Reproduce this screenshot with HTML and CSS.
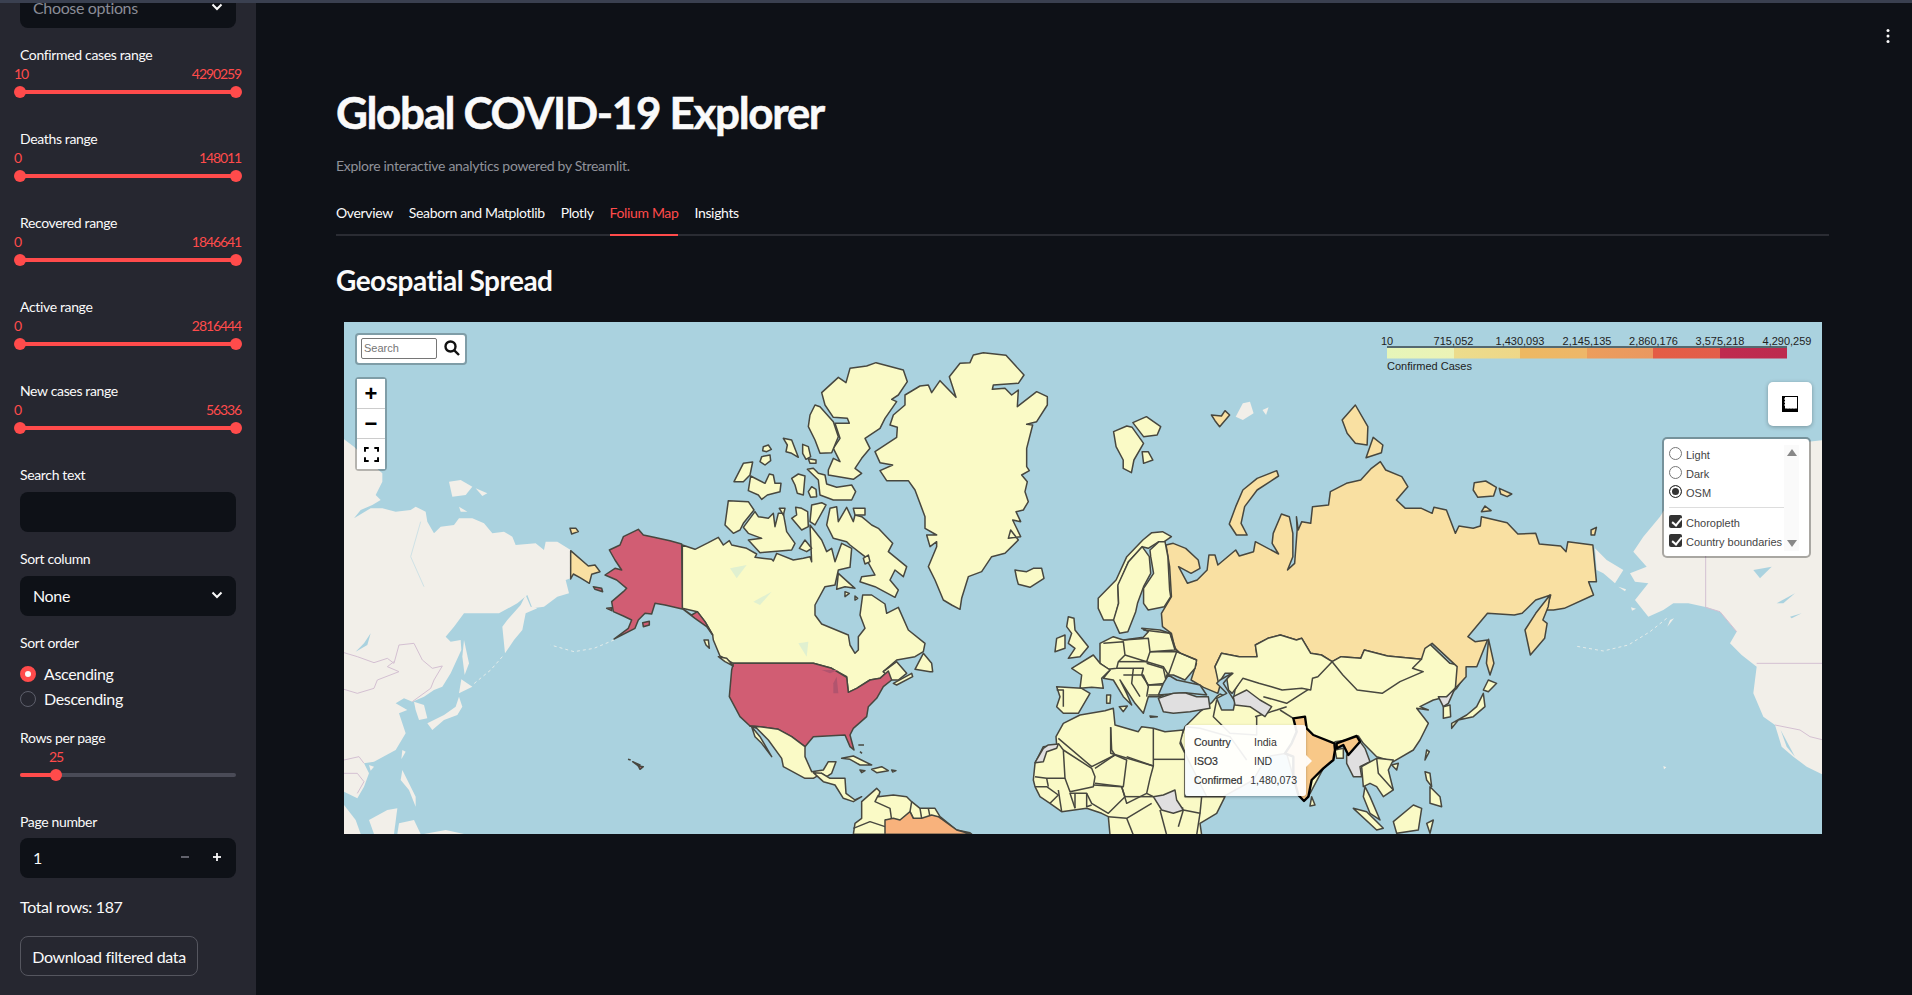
FILE: index.html
```html
<!DOCTYPE html>
<html lang="en">

<head>
    <meta charset="UTF-8">
    <title>Global COVID-19 Explorer</title>
    <link rel="stylesheet" href="styles.css">
</head>

<body>
    <aside class="sidebar">
        <div class="select cut">
            <span class="placeholder">Choose options</span>
            <svg class="chev" viewBox="0 0 12 8"><polyline points="1.5,1.5 6,6 10.5,1.5" /></svg>
        </div>

        <div class="field">
            <div class="lbl">Confirmed cases range</div>
            <div class="vals"><span>10</span><span>4290259</span></div>
            <div class="track"><i class="fill full"></i><b class="thumb start"></b><b class="thumb end"></b></div>
        </div>
        <div class="field">
            <div class="lbl">Deaths range</div>
            <div class="vals"><span>0</span><span>148011</span></div>
            <div class="track"><i class="fill full"></i><b class="thumb start"></b><b class="thumb end"></b></div>
        </div>
        <div class="field">
            <div class="lbl">Recovered range</div>
            <div class="vals"><span>0</span><span>1846641</span></div>
            <div class="track"><i class="fill full"></i><b class="thumb start"></b><b class="thumb end"></b></div>
        </div>
        <div class="field">
            <div class="lbl">Active range</div>
            <div class="vals"><span>0</span><span>2816444</span></div>
            <div class="track"><i class="fill full"></i><b class="thumb start"></b><b class="thumb end"></b></div>
        </div>
        <div class="field">
            <div class="lbl">New cases range</div>
            <div class="vals"><span>0</span><span>56336</span></div>
            <div class="track"><i class="fill full"></i><b class="thumb start"></b><b class="thumb end"></b></div>
        </div>

        <div class="lbl">Search text</div>
        <div class="input"></div>

        <div class="lbl next">Sort column</div>
        <div class="select">
            <span>None</span>
            <svg class="chev" viewBox="0 0 12 8"><polyline points="1.5,1.5 6,6 10.5,1.5" /></svg>
        </div>

        <div class="lbl next">Sort order</div>
        <div class="radios">
            <div class="radio on"><i></i>Ascending</div>
            <div class="radio"><i></i>Descending</div>
        </div>

        <div class="field">
            <div class="lbl">Rows per page</div>
            <div class="vals single"><span>25</span></div>
            <div class="track off"><i class="fill part"></i><b class="thumb mid"></b></div>
        </div>

        <div class="lbl">Page number</div>
        <div class="input number">
            <span class="num">1</span>
            <svg class="step dim" viewBox="0 0 10 10"><line x1="1" y1="5" x2="9" y2="5" /></svg>
            <svg class="step" viewBox="0 0 10 10"><line x1="1" y1="5" x2="9" y2="5" /><line x1="5" y1="1" x2="5" y2="9" /></svg>
        </div>

        <div class="total">Total rows: 187</div>
        <div class="download">Download filtered data</div>
    </aside>

    <main class="main">
        <svg class="dots" viewBox="0 0 4 16"><circle cx="2" cy="2.5" r="1.5" /><circle cx="2" cy="8" r="1.5" /><circle cx="2" cy="13.5" r="1.5" /></svg>

        <h1>Global COVID-19 Explorer</h1>
        <p class="sub">Explore interactive analytics powered by Streamlit.</p>

        <nav class="tabs">
            <span>Overview</span>
            <span>Seaborn and Matplotlib</span>
            <span>Plotly</span>
            <span class="active">Folium Map</span>
            <span>Insights</span>
        </nav>

        <h2>Geospatial Spread</h2>

        <div class="map">
            <svg class="world" viewBox="344 322 1478 512">
                <!-- fondo de tiles -->
                <g class="tile" transform="translate(344 480) scale(.33333)">
                    <polygon points="-10,-130 30,-100 70,-60 115,-20 115,5 95,45 110,60 85,75 50,90 30,115 80,85 115,85 155,95 200,90 215,80 245,95 250,125 270,160 290,140 330,135 345,115 385,115 420,130 445,160 480,155 505,170 515,195 575,190 600,210 605,185 640,185 680,210 680,295 665,300 675,340 640,350 600,380 565,385 550,345 520,370 465,400 360,400 330,440 305,470 320,485 350,480 352,510 320,580 295,620 270,630 240,650 205,665 180,655 155,670 190,690 165,700 185,760 155,810 90,845 60,850 75,880 60,920 40,955 0,935 -10,930" />
                    <polygon points="0,975 35,1020 50,1062 -10,1062 -10,975" />
                    <polygon points="75,1020 130,990 160,985 150,1062 90,1062" />
                    <polygon points="165,1030 210,1020 230,1062 160,1062" />
                    <polygon points="240,1062 305,1050 360,1062" />
                    <polygon points="210,665 240,675 250,715 225,720 215,690" />
                    <polygon points="360,480 375,550 362,585 355,530" />
                    <polygon points="352,598 385,620 345,640" />
                    <polygon points="345,650 355,680 340,705 300,720 265,750 250,730 300,705 335,680" />
                    <polygon points="545,345 530,375 490,420 475,440 483,520 510,480 535,450 545,400 580,385 560,380" />
                    <polygon points="315,5 350,0 385,20 365,45 325,50" />
                    <polygon points="395,25 430,40 415,48" />
                    <polygon points="345,80 370,95 350,95" />
                    <polygon points="175,810 185,815 172,838" />
                    <polygon points="75,855 90,860 80,872" />
                    <polygon points="175,870 190,900 215,950 215,980 195,930 170,900" />
                    <polyline class="chain" points="475,530 440,570 385,615" />
                    <polyline class="chain" points="810,480 750,505 690,515 620,495" />
                    <polyline class="bd" points="0,518 40,530 90,548 130,535 150,550 165,495 210,490 235,540 265,565 295,558 270,600 260,625 205,665" />
                    <polyline class="bd" points="0,628 40,640 90,625 100,600 165,575 130,560 150,545" />
                    <polyline class="bd" points="0,840 45,830 60,850" />
                    <polyline class="bd" points="0,880 40,880 60,905 40,940" />
                    <polyline class="river" points="230,125 200,230 240,320" />
                    <polygon class="lake" points="80,460 70,495 35,515 60,490" />
                </g>
                <g class="tile" transform="translate(1560 520) scale(.33333)">
                    <polygon points="105,85 140,120 190,150 165,190 130,160 110,150" />
                    <polygon points="250,50 220,95 260,140 210,160 225,185 265,190 225,240 265,290 310,270 340,250 385,250 440,262 480,275 530,335 510,370 545,405 590,440 580,520 610,590 645,615 665,680 700,710 740,740 790,765 790,-240 420,-200 300,-10" />
                    <polygon points="175,200 198,208 195,214" />
                    <polygon points="330,300 342,295 322,320" />
                    <polygon points="213,262 228,266 216,272" />
                    <polyline class="chain" points="320,295 270,335 205,375 130,393 45,378" />
                    <polygon points="310,738 319,742 312,748" />
                    <polyline class="bd" points="437,0 437,262 480,275 530,335" />
                    <polyline class="bd" points="590,430 790,430" />
                    <polyline class="bd" points="645,615 720,630 750,650 790,660" />
                    <polygon class="lake" points="580,150 635,140 600,175" />
                    <polygon class="lake" points="650,250 705,220 670,250" />
                    <polygon class="lake" points="690,290 725,280 695,295" />
                    <polygon class="lake" points="662,630 705,710 680,680" />
                    <polygon class="lake" points="480,280 525,345 495,310" />
                </g>

                <!-- pais por pais -->
                <g class="c" transform="translate(1000 600) scale(.33333)">
                    <polygon class="y" points="555,380 600,335 635,308 650,290 660,282 700,300 705,270 730,225 850,210 993,185 1100,190 1285,128 1350,190 1395,200 1390,235 1370,265 1340,290 1300,300 1260,320 1285,330 1250,325 1285,370 1260,420 1240,450 1180,485 1130,470 1090,430 1075,408 1040,420 1005,425 1005,450 1000,480 970,505 925,590 895,585 880,530 860,460 800,470 760,540 670,590 620,590 560,470 540,420" />
                    <polyline points="650,300 640,350 690,400 770,405 770,350" />
                    <polyline points="555,380 600,385 690,410 740,480" />
                    <polyline points="765,350 830,330 860,320" />
                    <polyline points="840,330 880,355" />
                    <polyline points="790,290 860,310 930,265" />
                </g>
                <g class="c" transform="translate(1050 400) scale(.35714 .33333)">
                    <polygon class="r" points="325,435 345,430 380,445 415,480 420,505 395,520 360,500 385,550 412,540 440,510 445,465 462,465 470,495 520,450 530,468 570,455 575,425 640,462 622,430 625,400 648,342 670,350 680,400 680,470 665,510 685,490 692,390 690,350 695,390 705,365 730,370 735,320 780,315 785,275 830,250 870,240 900,205 925,185 940,210 985,230 1002,260 970,300 995,325 1040,325 1070,340 1075,322 1110,330 1135,400 1145,378 1185,385 1205,378 1208,350 1280,368 1310,402 1360,400 1370,432 1430,438 1445,455 1450,425 1520,435 1530,545 1508,545 1522,585 1440,625 1410,630 1390,630 1402,585 1360,600 1322,640 1300,645 1225,640 1170,710 1190,725 1225,720 1195,800 1165,800 1165,830 1135,865 1140,800 1070,730 1050,745 1040,778 945,768 880,750 870,775 815,770 790,785 760,765 730,760 705,715 690,720 645,705 610,715 575,735 580,770 530,770 480,760 462,800 478,850 470,880 430,862 395,840 410,790 365,760 350,745 340,700 315,680 312,640 340,590 335,500" />
                    <polygon class="r" points="635,212 640,228 580,270 545,320 535,370 552,405 522,405 502,372 520,320 540,270 580,235" />
                    <polygon class="r" points="855,15 890,80 888,135 855,130 832,100 818,60" />
                    <polygon class="r" points="905,112 932,135 928,158 885,173" />
                    <polygon class="r" points="1188,248 1220,243 1250,262 1242,288 1198,292 1185,270" />
                    <polygon class="r" points="1258,265 1293,282 1280,290 1262,282" />
                    <polygon class="r" points="1218,318 1235,332 1208,335" />
                    <polygon class="r" points="452,45 480,48 490,32 503,45 475,80 462,62" />
                    <polygon class="r" points="1400,585 1395,620 1380,660 1392,670 1385,715 1345,765 1330,690 1360,640" />
                    <polygon class="r" points="1515,390 1530,382 1525,405 1515,405" />
                    <polygon class="r" points="1228,718 1243,790 1232,825 1222,790" />
                    <polygon class="land" points="540,10 560,5 570,40 540,60 520,50" />
                    <polygon class="land" points="595,30 612,22 605,45" />
                    <polygon class="y" points="178,95 215,78 230,82 262,130 235,180 228,218 205,205 205,180 185,140" />
                    <polygon class="y" points="232,68 270,50 310,80 300,105 262,110" />
                    <polygon class="y" points="258,155 275,155 288,180 262,190" />
                    <polygon class="y" points="135,595 185,540 215,470 260,420 285,398 315,395 340,410 320,425 305,425 275,445 258,440 220,485 190,560 192,610 180,660 150,660 135,625" />
                    <polygon class="y" points="258,440 278,470 282,520 262,560 245,610 240,635 218,695 195,700 178,660 192,610 190,555 220,485" />
                    <polygon class="y" points="280,450 305,425 322,425 330,470 335,570 338,590 320,620 275,630 262,610 262,565 290,520 282,470" />
                    <polygon class="y" points="462,800 480,760 530,770 580,770 575,735 610,715 645,705 690,720 705,715 730,760 760,765 790,785 750,830 735,835 730,870 705,865 650,870 620,860 585,850 540,835 510,880 500,870 495,835 512,820 490,820 472,850" />
                    <polygon class="y" points="790,785 815,770 870,775 880,750 945,768 1040,778 1015,805 1045,815 980,845 930,880 860,870 820,825" />
                </g>
                <g class="c" transform="translate(1000 600) scale(.33333)">
                    <!-- europa -->
                    <polygon class="y" points="300,130 340,110 370,120 430,112 445,95 425,85 480,90 510,100 530,155 590,180 585,205 555,240 520,225 500,225 495,280 480,290 445,290 430,340 405,310 360,240 380,280 395,315 370,290 340,240 310,235 330,210 300,190" />
                    <polyline points="310,130 370,125 375,165 355,185 350,205 305,210" />
                    <polyline points="370,120 445,115 450,155 440,185 375,165" />
                    <polyline points="430,90 510,100 525,150 450,155" />
                    <polyline points="450,155 530,155 590,180" />
                    <polyline points="530,155 505,225 490,200 440,185" />
                    <polyline points="440,190 490,205 500,250 445,255 425,225" />
                    <polyline points="445,255 495,255 490,285 445,285" />
                    <polyline points="355,185 440,185" />
                    <polyline points="350,205 430,205 425,225" />
                    <polyline points="370,225 430,225 445,260 440,290" />
                    <polyline points="400,205 395,250 420,290" />
                    <polygon class="y" points="205,50 222,55 225,90 265,140 240,170 205,175 225,145 205,130 215,100 200,80" />
                    <polygon class="y" points="170,115 195,105 195,145 165,155" />
                    <polygon class="y" points="215,205 280,165 300,190 330,210 305,235 310,265 275,262 240,265 245,225" />
                    <polygon class="y" points="170,260 245,265 270,280 235,340 190,340 170,320 180,290" />
                    <polyline points="170,270 190,270 190,320" />
                    <polygon class="y" points="320,285 332,285 330,310 320,310" />
                    <polygon class="y" points="358,320 382,318 370,335" />
                    <polygon class="y" points="450,348 472,350 452,352" />
                    <polygon class="w" points="505,225 530,240 600,255 620,285 555,278 475,285 490,250" />
                    <polygon class="w" points="660,240 695,220 670,250 705,305 700,330 665,330 650,295 680,280 650,250" />

                    <!-- asia -->
                    <polygon class="g" points="475,295 520,280 555,278 590,290 625,290 630,325 570,335 520,340 490,335" />
                    <polygon class="g" points="700,290 740,270 780,300 815,320 795,350 750,320 705,315" />
                    <polygon class="g" points="1365,265 1340,290 1315,290 1330,320 1345,310" />
                    <polygon class="y" points="1330,320 1350,315 1352,350 1330,355" />
                    <polygon class="y" points="1005,450 1030,445 1030,475 1010,475" />
                    <polygon class="g" points="1040,465 1080,425 1095,445 1110,485 1080,500 1085,530 1060,530 1040,490" />
                    <polygon class="y" points="1085,500 1130,475 1180,480 1165,510 1180,570 1150,590 1130,560 1110,550 1090,560" />
                    <polyline points="1130,475 1135,520 1180,570" />
                    <polygon class="y" points="1095,560 1110,590 1140,660 1110,640 1090,590" />
                    <polygon class="y" points="1060,625 1100,635 1150,685 1130,690" />
                    <polygon class="y" points="1180,665 1240,615 1265,625 1255,690 1190,700" />
                    <polygon class="y" points="1280,670 1300,660 1290,700" />
                    <polygon class="y" points="1275,515 1290,520 1295,560 1280,540" />
                    <polygon class="y" points="1290,560 1320,590 1325,620 1290,610" />
                    <polygon class="y" points="1280,450 1288,455 1275,480" />
                    <polygon class="y" points="1175,495 1195,490 1190,510" />
                    <polygon class="y" points="935,590 945,615 930,618" />
                    <polygon class="y" points="1465,240 1490,250 1465,275 1450,270" />
                    <polygon class="y" points="1450,280 1455,320 1420,350 1375,360 1355,385 1355,370 1400,345 1430,320" />
                    <polygon class="o2 hover" points="880,355 915,350 920,385 940,405 1003,430 1005,450 1000,480 970,505 935,540 925,590 912,603 895,585 880,530 880,470 855,460 875,430 890,395" />
                    <polygon class="o2 hover" points="1010,430 1070,408 1080,425 1045,465 1030,435 1010,445" />
                </g>
                <g class="c" transform="translate(1020 640) scale(.33333)">
                    <!-- africa -->
                    <polygon class="y" points="110,315 108,290 130,250 180,225 255,212 280,205 285,255 355,275 365,260 400,265 435,275 490,270 480,310 495,340 495,470 615,470 590,520 540,550 545,585 270,585 265,530 245,520 200,505 125,515 90,490 60,470 45,440 40,420 45,370 70,320" />
                    <polyline points="115,295 215,380 285,345 275,330 272,262" />
                    <polyline points="115,310 130,330 135,415 80,415 45,410" />
                    <polyline points="130,330 215,385 225,410 220,440 150,455 135,415" />
                    <polyline points="225,385 285,345 320,360 310,440 225,430" />
                    <polyline points="272,262 272,340 400,378 400,265" />
                    <polyline points="320,350 400,378 390,415 380,460 320,490 305,440" />
                    <polyline points="400,358 495,358" />
                    <polyline points="380,460 400,470 490,505" />
                    <polyline points="220,435 305,440 315,470 265,520 215,490 200,460 150,460 165,505" />
                    <polyline points="165,460 165,505" />
                    <polyline points="200,460 200,500 215,495" />
                    <polyline points="45,440 80,440 115,465 90,490" />
                    <polyline points="80,415 85,440" />
                    <polyline points="115,450 125,515" />
                    <polyline points="265,530 320,535 395,490" />
                    <polyline points="315,470 400,470" />
                    <polyline points="320,535 340,585" />
                    <polyline points="420,510 440,585" />
                    <polyline points="490,510 540,520 530,585" />
                    <polyline points="475,560 490,510" />
                    <polyline points="540,520 545,470" />
                    <polygon class="g" points="400,470 430,465 465,450 470,480 490,510 460,520 425,510" />
                    <polygon class="g" points="45,368 70,325 85,315 115,312 110,325 80,335 70,365" />
                </g>
                <g class="c" transform="translate(760 340) scale(.33333)">
                    <!-- groenlandia y arriba de canada -->
                    <polygon class="y" points="435,165 480,138 505,135 515,158 540,122 588,172 568,110 600,70 630,68 640,45 670,38 738,46 792,105 775,130 700,135 697,148 735,145 755,165 775,150 772,200 830,155 862,170 862,195 830,245 800,253 818,255 800,325 800,380 808,392 785,405 802,425 795,455 805,485 790,510 768,515 782,545 758,540 782,590 745,595 752,570 775,600 735,640 695,650 665,695 625,710 605,775 600,808 575,795 550,780 525,720 505,680 530,620 530,605 510,620 500,585 530,585 495,565 495,530 465,450 445,422 380,422 360,392 398,375 360,368 345,335 410,292 412,262 390,255 400,225 435,195" />
                    <polygon class="y" points="185,158 235,112 258,128 270,85 320,78 348,68 430,90 442,125 415,165 395,178 410,185 375,235 360,265 315,295 330,325 305,355 285,385 305,400 280,418 205,405 205,390 220,355 240,365 220,325 240,295 225,250 268,250 262,235 220,232 195,195" />
                    <polygon class="y" points="165,195 180,200 220,245 235,290 215,338 180,340 165,300 145,260 150,225" />
                    <polygon class="y" points="765,690 800,695 820,685 845,685 852,715 810,742 775,733 770,715" />
                </g>
                <g class="c" transform="translate(560 480) scale(.33333)">
                    <polygon class="y" points="367,195 405,208 445,188 475,172 490,195 508,182 515,195 560,205 590,222 585,232 635,238 640,243 650,220 700,240 730,235 750,230 755,245 750,135 785,180 800,215 815,205 825,245 845,190 875,205 870,262 835,270 825,315 795,320 765,375 765,405 785,432 865,465 870,495 885,520 895,510 895,470 915,445 900,405 908,345 935,345 975,372 980,400 1015,382 1045,450 1095,490 1090,515 1065,530 1010,540 970,575 985,573 960,595 930,600 890,625 865,637 860,590 815,565 760,550 520,550 480,528 460,480 458,465 435,425 412,395 367,385" />
                    <polygon class="pale" points="510,265 560,255 530,295" />
                    <polygon class="pale" points="580,365 635,335 600,375" />
                    <polygon class="pale" points="715,490 745,485 740,530" />
                    <polygon class="y" points="970,575 1010,545 1040,580 1015,600 995,600" />
                    <polygon class="y" points="1000,610 1055,580 1058,590 1010,615" />
                    <polygon class="y" points="1090,520 1065,568 1110,575 1118,575 1115,550" />
                    <polygon class="u" points="235,148 250,165 275,170 330,182 365,192 367,385 395,405 412,395 435,425 458,465 440,440 405,415 370,388 315,375 285,370 275,402 255,400 235,420 225,445 162,477 205,445 215,420 190,408 160,395 155,365 190,335 200,325 170,300 135,285 165,265 185,270 165,240 148,210 180,195 190,170" />
                    <polygon class="u" points="520,550 760,550 815,565 860,592 865,637 890,625 930,600 960,595 985,573 995,600 970,620 950,655 925,680 920,710 880,745 870,765 882,810 870,800 855,765 800,768 760,770 735,800 695,770 655,748 600,740 570,738 540,710 508,650 515,570" />
                    <polygon class="lk" points="785,570 835,570 810,580" />
                    <polygon class="lk" points="830,590 835,640 820,640 820,610" />
                    <polygon class="y" points="570,738 600,740 655,748 695,770 735,800 735,830 755,875 790,870 805,845 828,845 815,880 800,890 785,880 760,895 735,895 670,860 665,835 625,780 590,745" />
                    <polygon class="y" points="575,740 600,770 635,830 605,790 585,770" />
                    <polygon class="y" points="760,878 785,880 810,895 855,895 858,940 885,960 905,950 880,965 850,955 825,915 790,905" />
                    <polygon class="y" points="845,835 880,828 935,855 900,855 870,838" />
                    <polygon class="y" points="935,868 965,860 985,872 950,878" />
                    <polygon class="y" points="900,870 915,872 905,878" />
                    <polygon class="y" points="995,870 1008,872 998,876" />
                    <polyline points="895,795 912,795" />
                    <polyline points="900,815 906,820" />
                    <polygon class="y" points="475,530 500,535 520,558 495,545" />
                    <polygon class="y" points="432,480 445,480 448,505 438,495" />
                    <polygon class="y" points="905,965 950,925 960,935 955,950 1000,945 1040,950 1055,965 1080,985 1125,985 1140,1010 1190,1050 1230,1058 1235,1063 880,1063 885,1030 905,1015" />
                    <polyline points="955,945 945,965 990,985 995,1020 975,1020" />
                    <polyline points="1055,965 1050,995 1060,1015" />
                    <polyline points="1080,985 1085,1015" />
                    <polyline points="1105,985 1110,1010" />
                    <polyline points="880,1045 930,1025 975,1040" />
                    <polygon class="o" points="975,1063 975,1020 1000,1015 1020,1020 1050,995 1060,1015 1085,1015 1115,1005 1135,1010 1190,1050 1235,1063" />
                    <polygon class="r" points="32,212 85,258 105,255 120,275 95,283 88,310 60,293 40,282 32,297" />
                    <polygon class="r" points="30,145 48,145 55,155 35,162" />
                    <polygon class="u" points="100,320 125,325 128,335 105,328" />
                    <polygon class="u" points="140,385 155,383 155,392" />
                    <polygon class="u" points="248,428 268,424 268,435 250,440" />
                    <polyline points="204,838 212,840" />
                    <polygon class="u" points="218,845 240,855 235,858" />
                    <polygon class="u" points="235,858 250,860 240,868" />
                    <!-- baffin -->
                    <polygon class="y" points="810,85 830,80 835,125 860,82 880,125 885,105 905,110 935,135 955,145 998,190 985,215 1040,260 1030,290 1005,270 990,300 1015,330 1005,352 945,320 900,305 905,290 945,285 915,230 870,195 860,185 820,175 800,135" />
                    <polygon class="y" points="880,85 915,85 915,105 885,105" />
                    <polygon class="y" points="835,280 885,325 855,320 830,328" />
                    <polygon class="y" points="910,235 925,225 930,245 915,252" />
                    <polygon class="y" points="855,335 868,340 855,350" />
                    <polygon class="y" points="885,348 893,355 885,360" />
                </g>
                <g class="c" transform="translate(680 400) scale(.33333)">
                    <polygon class="y" points="190,190 218,186 210,225 190,245 162,245" />
                    <polygon class="y" points="250,140 265,135 274,148 260,155 248,152" />
                    <polygon class="y" points="245,170 270,165 272,182 255,195 240,185" />
                    <polygon class="y" points="310,115 335,120 355,172 335,160 318,155 322,135" />
                    <polygon class="y" points="368,133 385,140 392,170 378,178 368,160" />
                    <polygon class="y" points="385,176 408,180 408,190 390,190" />
                    <polygon class="y" points="212,228 255,250 268,222 280,225 285,250 303,250 300,275 262,285 245,298 235,285 205,272" />
                    <polygon class="y" points="335,235 355,222 375,228 370,285 352,280 345,255" />
                    <polygon class="y" points="395,260 408,268 410,290 392,292 385,275" />
                    <polygon class="y" points="382,208 400,205 415,220 435,225 440,252 470,262 515,255 527,275 515,300 460,300 420,285 415,240" />
                    <polygon class="y" points="145,302 205,305 222,330 190,370 180,390 160,400 135,375" />
                    <polygon class="y" points="225,335 235,350 265,355 280,340 285,380 295,340 310,340 320,395 345,430 335,450 240,458 205,420 245,415 205,400 190,382" />
                    <polygon class="y" points="298,325 315,325 310,345" />
                    <polygon class="y" points="347,322 365,325 383,335 385,380 365,390 335,355 350,345" />
                    <polygon class="y" points="395,315 425,308 438,315 405,375 390,365" />
                    <polygon class="y" points="375,420 395,445 380,455 358,445" />
                </g>

                <!-- leyenda -->
                <defs>
                    <linearGradient id="l1"><stop offset="0" stop-color="#e6f5b9" /><stop offset="1" stop-color="#ecf3b6" /></linearGradient>
                    <linearGradient id="l2"><stop offset="0" stop-color="#ecdc8c" /><stop offset="1" stop-color="#eed788" /></linearGradient>
                    <linearGradient id="l3"><stop offset="0" stop-color="#eeb861" /><stop offset="1" stop-color="#eeb769" /></linearGradient>
                    <linearGradient id="l4"><stop offset="0" stop-color="#ec9d5c" /><stop offset="1" stop-color="#ea9860" /></linearGradient>
                    <linearGradient id="l5"><stop offset="0" stop-color="#e45c45" /><stop offset="1" stop-color="#e35e4a" /></linearGradient>
                    <linearGradient id="l6"><stop offset="0" stop-color="#bf2b4f" /><stop offset="1" stop-color="#bd2a4e" /></linearGradient>
                </defs>
                <rect x="1387" y="348" width="67" height="10.5" fill="url(#l1)" />
                <rect x="1454" y="348" width="66" height="10.5" fill="url(#l2)" />
                <rect x="1520" y="348" width="67" height="10.5" fill="url(#l3)" />
                <rect x="1587" y="348" width="66" height="10.5" fill="url(#l4)" />
                <rect x="1653" y="348" width="67" height="10.5" fill="url(#l5)" />
                <rect x="1720" y="348" width="67" height="10.5" fill="url(#l6)" />
                <line x1="1387" y1="347" x2="1787" y2="347" stroke="#000" />
                <g class="leg">
                    <text x="1387" y="344.5">10</text>
                    <text x="1453.5" y="344.5">715,052</text>
                    <text x="1520" y="344.5">1,430,093</text>
                    <text x="1587" y="344.5">2,145,135</text>
                    <text x="1653.5" y="344.5">2,860,176</text>
                    <text x="1720" y="344.5">3,575,218</text>
                    <text x="1787" y="344.5">4,290,259</text>
                </g>
                <text class="leg-t" x="1387" y="370">Confirmed Cases</text>
            </svg>

            <div class="search">
                <div class="search-in">Search</div>
                <svg class="glass" viewBox="0 0 16 16"><circle cx="6.5" cy="6.5" r="5" /><line x1="10.3" y1="10.3" x2="15" y2="15" /></svg>
            </div>

            <div class="zoom">
                <div class="zbtn">+</div>
                <div class="zbtn">&minus;</div>
                <div class="zbtn">
                    <svg class="full-ic" viewBox="0 0 16 16"><polyline points="1,5 1,1 5,1" /><polyline points="11,1 15,1 15,5" /><polyline points="15,11 15,15 11,15" /><polyline points="5,15 1,15 1,11" /></svg>
                </div>
            </div>

            <div class="measure">
                <svg viewBox="0 0 16 16"><path d="M0 0H16V16H0Z M3 1V12.5H15V1Z" fill-rule="evenodd" /><path d="M3 3H2M3 6H2M3 9H2M6 12.5V11.5M9 12.5V11.5M12 12.5V11.5" stroke="#fff" stroke-width="1" /></svg>
            </div>

            <div class="layers">
                <div class="layer-list">
                    <div class="row"><i class="opt"></i>Light</div>
                    <div class="row"><i class="opt"></i>Dark</div>
                    <div class="row"><i class="opt sel"></i>OSM</div>
                    <div class="sep"></div>
                    <div class="row"><i class="chk"></i>Choropleth</div>
                    <div class="row"><i class="chk"></i>Country boundaries</div>
                </div>
                <div class="scroll"><i class="up"></i><i class="down"></i></div>
            </div>

            <div class="tip">
                <div class="tip-row"><b>Country</b><span>India</span></div>
                <div class="tip-row"><b>ISO3</b><span>IND</span></div>
                <div class="tip-row"><b>Confirmed</b><span>1,480,073</span></div>
            </div>
        </div>
    </main>
</body>

</html>
```

FILE: styles.css
```css
* {
    box-sizing: border-box;
}

body {
    margin: 0;
    height: 100vh;
    overflow: hidden;
    display: flex;
    background-color: #0e1117;
    color: #fafafa;
    font-family: "Lato", "Noto Sans", sans-serif;
    letter-spacing: -0.35px;
    border-top: 3px solid #3a4050;
}

.sidebar {
    width: 256px;
    flex: none;
    overflow: hidden;
    background-color: #262730;
    padding: 0 20px;
}

.lbl {
    font-size: 14px;
    line-height: 20px;
    height: 20px;
}

.lbl.next {
    margin-top: 17px;
}

.field {
    margin-bottom: 28px;
}

.vals {
    display: flex;
    justify-content: space-between;
    margin: 0 -5px 0 -6px;
    height: 18px;
    line-height: 18px;
    font-size: 14px;
    letter-spacing: -1.1px;
    color: #ff4b4b;
}

.vals.single {
    padding-left: 35px;
}

.track {
    position: relative;
    height: 18px;
}

.track::before {
    content: "";
    display: block;
    position: absolute;
    top: 7px;
    left: 0;
    right: 0;
    height: 4px;
    border-radius: 2px;
}

.track.off::before {
    background-color: #4a4b57;
}

.fill {
    position: absolute;
    top: 7px;
    left: 0;
    height: 4px;
    border-radius: 2px;
    background-color: #ff4b4b;
}

.fill.full {
    width: 100%;
}

.fill.part {
    width: 36px;
}

.thumb {
    position: absolute;
    top: 3px;
    width: 12px;
    height: 12px;
    border-radius: 50%;
    background-color: #ff4b4b;
}

.thumb.start {
    left: -6px;
}

.thumb.end {
    right: -6px;
}

.thumb.mid {
    left: 30px;
}

.select,
.input {
    height: 40px;
    border-radius: 8px;
    background-color: #0e1117;
    font-size: 16px;
    display: flex;
    align-items: center;
    padding: 0 13px 2px;
    margin-top: 7px;
}

.select {
    justify-content: space-between;
}

.select.cut {
    margin-top: -15px;
    margin-bottom: 17px;
}

.placeholder {
    color: #8a8c96;
}

.chev {
    width: 12px;
    height: 8px;
    fill: none;
    stroke: #fafafa;
    stroke-width: 2;
}

.radios {
    margin-top: 8px;
    margin-bottom: 17px;
}

.radio {
    height: 25px;
    display: flex;
    align-items: center;
    gap: 8px;
    font-size: 16px;
}

.radio i {
    width: 16px;
    height: 16px;
    border-radius: 50%;
    border: 1px solid #5d5f6b;
}

.radio.on i {
    border: 5px solid #ff4b4b;
    background-color: #fafafa;
}

.input.number {
    margin-top: 6px;
    padding-right: 14px;
}

.num {
    flex: 1;
}

.step {
    width: 10px;
    height: 10px;
    margin-left: 22px;
    stroke: #fafafa;
    stroke-width: 1.8;
}

.step.dim {
    stroke: #6b6d77;
}

.total {
    margin-top: 17px;
    font-size: 16px;
    line-height: 24px;
}

.download {
    margin-top: 17px;
    width: 178px;
    height: 40px;
    border: 1px solid #55565f;
    border-radius: 8px;
    font-size: 16px;
    display: flex;
    align-items: center;
    justify-content: center;
}

.main {
    position: relative;
    flex: 1;
    padding: 81px 83px 0 80px;
}

.dots {
    position: absolute;
    top: 25px;
    right: 22px;
    width: 4px;
    height: 16px;
    fill: #fafafa;
}

h1 {
    margin: 0;
    font-size: 44px;
    line-height: 56px;
    font-weight: 700;
    letter-spacing: -1.35px;
    -webkit-text-stroke: 0.5px #fafafa;
}

.sub {
    margin: 16px 0 0;
    font-size: 14px;
    line-height: 20px;
    letter-spacing: -0.3px;
    color: #90929a;
}

.tabs {
    display: flex;
    gap: 16px;
    margin-top: 27px;
    border-bottom: 2px solid #2a2c33;
    font-size: 14px;
    line-height: 20px;
}

.tabs span {
    padding-bottom: 11px;
    margin-bottom: -2px;
    border-bottom: 2px solid transparent;
}

.tabs .active {
    color: #ff4b4b;
    border-bottom-color: #ff4b4b;
}

h2 {
    margin: 26px 0 0;
    font-size: 28px;
    line-height: 36px;
    font-weight: 700;
    letter-spacing: -0.5px;
}

.map {
    position: relative;
    width: 1478px;
    height: 512px;
    margin: 24px 0 0 8px;
    background-color: #aad2df;
    overflow: hidden;
    font-family: "Liberation Sans", Arial, sans-serif;
    letter-spacing: 0;
    color: #333;
}

.world {
    display: block;
    width: 1478px;
    height: 512px;
}

.tile polygon {
    fill: #f2efe9;
}

.tile polyline {
    fill: none;
    vector-effect: non-scaling-stroke;
}

.tile .bd {
    stroke: #d4c0d2;
    stroke-width: 1;
}

.tile .chain {
    stroke: #e4ecea;
    stroke-width: 1;
    stroke-dasharray: 3 3;
}

.tile .river {
    stroke: #cfe2e6;
    stroke-width: 1;
}

.tile .lake {
    fill: #aad2df;
}

.c polygon,
.c polyline {
    stroke: #47473f;
    stroke-width: 1.5;
    stroke-linejoin: round;
    vector-effect: non-scaling-stroke;
    fill: none;
}

.c .y {
    fill: #fafac6;
}

.c .r {
    fill: #f9e0a2;
}

.c .u {
    fill: #d15d73;
}

.c .g {
    fill: #e0dfe0;
}

.c .o {
    fill: #f8b27c;
}

.c .o2 {
    fill: #f8c888;
}

.c .w {
    fill: #aad0df;
}

.c .land {
    fill: #f2efe9;
    stroke: none;
}

.c .pale {
    fill: #e0f0d0;
    stroke: none;
}

.c .lk {
    fill: #b2546e;
    stroke: none;
}

.c .hover {
    stroke: #000;
    stroke-width: 2.4;
}

.leg text {
    font-size: 11px;
    text-anchor: middle;
    fill: #222;
}

.leg-t {
    font-size: 11px;
    fill: #222;
}

.search {
    position: absolute;
    top: 11px;
    left: 11px;
    width: 112px;
    height: 32px;
    background-color: #fff;
    border: 2px solid rgba(0, 0, 0, 0.25);
    border-radius: 4px;
    background-clip: padding-box;
    padding: 3px 0 0 4px;
    display: flex;
}

.search-in {
    width: 76px;
    height: 21px;
    border: 1px solid #767676;
    border-radius: 2px;
    font-size: 11px;
    line-height: 19px;
    padding-left: 2px;
    color: #757575;
}

.glass {
    width: 16px;
    height: 16px;
    margin: 2px 0 0 7px;
    fill: none;
    stroke: #111;
    stroke-width: 2.4;
}

.zoom {
    position: absolute;
    top: 55px;
    left: 11px;
    width: 32px;
    border: 2px solid rgba(0, 0, 0, 0.25);
    border-radius: 4px;
    background-clip: padding-box;
}

.zbtn {
    height: 30px;
    background-color: #fff;
    border-bottom: 1px solid #ccc;
    display: flex;
    align-items: center;
    justify-content: center;
    font: 700 22px "Liberation Sans", Arial, sans-serif;
    color: #000;
}

.zbtn:last-child {
    border-bottom: none;
}

.full-ic {
    width: 15px;
    height: 15px;
    fill: none;
    stroke: #000;
    stroke-width: 2.2;
}

.measure {
    position: absolute;
    top: 60px;
    left: 1424px;
    width: 44px;
    height: 44px;
    background-color: #fff;
    border-radius: 5px;
    box-shadow: 0 1px 4px rgba(0, 0, 0, 0.3);
    display: flex;
    align-items: center;
    justify-content: center;
}

.measure svg {
    width: 16px;
    height: 16px;
}

.layers {
    position: absolute;
    top: 115px;
    left: 1318px;
    width: 149px;
    height: 121px;
    background-color: #fff;
    border: 2px solid rgba(0, 0, 0, 0.3);
    border-radius: 5px;
    background-clip: padding-box;
    display: flex;
    padding: 6px 10px 0 5px;
    font-size: 11px;
}

.layer-list {
    width: 116px;
    color: #444;
}

.row {
    height: 19px;
    display: flex;
    align-items: center;
    gap: 4px;
    white-space: nowrap;
}

.opt,
.chk {
    width: 13px;
    height: 13px;
    flex: none;
    margin-top: -2px;
}

.opt {
    border-radius: 50%;
    border: 1px solid #767676;
}

.opt.sel {
    border-color: #333;
    background-color: #333;
    box-shadow: inset 0 0 0 2px #fff;
}

.chk {
    position: relative;
    background-color: #333;
    border-radius: 2px;
}

.chk::after {
    content: "";
    position: absolute;
    left: 4.5px;
    top: 1px;
    width: 4px;
    height: 8px;
    border: solid #fff;
    border-width: 0 2px 2px 0;
    transform: rotate(40deg);
}

.sep {
    height: 1px;
    margin: 5px 0 5px;
    background-color: #ddd;
}

.scroll {
    position: relative;
    width: 15px;
    height: 106px;
    background-color: #fafafa;
}

.up,
.down {
    position: absolute;
    left: 3px;
    width: 0;
    height: 0;
    border: 5px solid transparent;
}

.up {
    top: -1px;
    border-bottom: 7px solid #888;
}

.down {
    bottom: -1px;
    border-top: 7px solid #888;
}

.tip {
    position: absolute;
    top: 403px;
    left: 841px;
    width: 121px;
    height: 71px;
    padding: 8px 9px;
    background-color: rgba(255, 255, 255, 0.92);
    border-radius: 3px;
    box-shadow: 0 1px 3px rgba(0, 0, 0, 0.3);
    font-size: 10.5px;
}

.tip::after {
    content: "";
    position: absolute;
    top: 30px;
    left: 100%;
    border: 6px solid transparent;
    border-left-color: rgba(255, 255, 255, 0.92);
    border-right-width: 0;
}

.tip-row {
    display: flex;
    height: 19px;
    line-height: 19px;
    white-space: nowrap;
}

.tip-row b {
    width: 60px;
    font-weight: 400;
    -webkit-text-stroke: 0.2px #333;
}
```
